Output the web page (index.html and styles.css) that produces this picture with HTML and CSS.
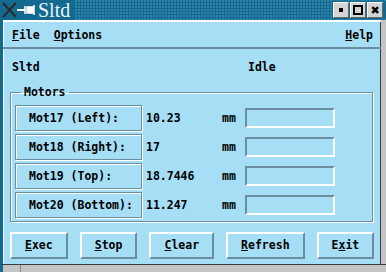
FILE: index.html
```html
<!DOCTYPE html>
<html>
<head>
<meta charset="utf-8">
<link rel="stylesheet" href="styles.css">
</head>
<body>
<div class="window">
  <div class="titlebar">
    <svg class="wm-icon" width="36" height="20" viewBox="0 0 36 20">
      <path d="M3 3 L16 17 M16 3 L3 17" stroke="#2a2a2a" stroke-width="2" fill="none"/>
      <path d="M17 10 H25" stroke="#ffffff" stroke-width="2"/>
      <path d="M25 6 V14 M27 7 H33 V13 H27 Z M34 5 V15" stroke="#ffffff" stroke-width="1.5" fill="#ffffff"/>
    </svg>
    <span class="title">Sltd</span>
    <span class="title-fill"></span>
    <div class="wm-buttons">
      <span class="wm-btn"><span class="dot"></span></span>
      <span class="wm-btn"><span class="sq"></span></span>
      <span class="wm-btn"><span class="x">✖</span></span>
    </div>
  </div>
  <div class="client">
    <div class="menubar">
      <span class="menu"><u>F</u>ile</span>
      <span class="menu"><u>O</u>ptions</span>
      <span class="menu-spacer"></span>
      <span class="menu"><u>H</u>elp</span>
    </div>
    <div class="status">
      <span class="status-name">Sltd</span>
      <span class="status-state">Idle</span>
    </div>
    <fieldset class="group">
      <legend class="group-label">Motors</legend>
      <div class="row">
        <div class="mot-label">Mot17 (Left):</div>
        <div class="mot-value">10.23</div>
        <div class="mot-unit">mm</div>
        <div class="mot-entry"></div>
      </div>
      <div class="row">
        <div class="mot-label">Mot18 (Right):</div>
        <div class="mot-value">17</div>
        <div class="mot-unit">mm</div>
        <div class="mot-entry"></div>
      </div>
      <div class="row">
        <div class="mot-label">Mot19 (Top):</div>
        <div class="mot-value">18.7446</div>
        <div class="mot-unit">mm</div>
        <div class="mot-entry"></div>
      </div>
      <div class="row">
        <div class="mot-label">Mot20 (Bottom):</div>
        <div class="mot-value">11.247</div>
        <div class="mot-unit">mm</div>
        <div class="mot-entry"></div>
      </div>
    </fieldset>
    <div class="buttons">
      <span class="btn"><u>E</u>xec</span>
      <span class="btn"><u>S</u>top</span>
      <span class="btn"><u>C</u>lear</span>
      <span class="btn"><u>R</u>efresh</span>
      <span class="btn">E<u>x</u>it</span>
    </div>
  </div>
  <div class="bottom-frame">
    <span class="corner"></span>
    <span class="edge"></span>
  </div>
</div>
</body>
</html>
```
FILE: styles.css
```css
html, body {
  margin: 0;
  padding: 0;
  width: 386px;
  height: 272px;
  overflow: hidden;
  background: #a6def6;
}
.window {
  width: 386px;
  height: 272px;
  display: flex;
  flex-direction: column;
  box-sizing: border-box;
  background: #a6def6;
}
.titlebar {
  height: 20px;
  display: flex;
  align-items: center;
  background-color: #146a8e;
  background-image: radial-gradient(circle at 1px 1px, #3d8fb5 0.6px, transparent 0.9px);
  background-size: 3px 3px;
  flex: none;
}
.wm-icon {
  flex: none;
  display: block;
  background: #146a8e;
}
.title {
  font-family: "Liberation Serif", "DejaVu Serif", serif;
  font-size: 20px;
  color: #e6f4fb;
  line-height: 18px;
  padding: 1px 4px 1px 2px;
  background: #146a8e;
}
.title-fill {
  flex: 1;
}
.wm-buttons {
  display: flex;
  gap: 1px;
  padding-right: 3px;
  height: 18px;
  align-items: center;
  background: #146a8e;
}
.wm-btn {
  width: 14px;
  height: 14px;
  background: #d4d4d4;
  border-top: 1px solid #ffffff;
  border-left: 1px solid #ffffff;
  border-right: 1px solid #666;
  border-bottom: 1px solid #666;
  display: flex;
  align-items: center;
  justify-content: center;
}
.dot {
  width: 4px;
  height: 4px;
  background: #000;
}
.sq {
  width: 6px;
  height: 6px;
  border: 2px solid #000;
}
.x {
  font-size: 11px;
  line-height: 11px;
  font-family: "DejaVu Sans", sans-serif;
  color: #000;
}
.client {
  flex: 1;
  display: flex;
  flex-direction: column;
  border-left: 3px solid #146a8e;
  border-right: 5px solid #c4c4c4;
  box-shadow: inset 1px 0 0 #ffffff, inset -1px 0 0 #3a3a3a;
  font-family: "DejaVu Sans Mono", "Liberation Mono", monospace;
  font-weight: bold;
  font-size: 11.5px;
  color: #000;
}
.menubar {
  height: 29px;
  box-sizing: border-box;
  display: flex;
  align-items: center;
  padding: 0 8px 0 9px;
  gap: 14px;
  border-top: 2px solid #ffffff;
  border-bottom: 2px solid #6a8da0;
  flex: none;
}
.menu-spacer {
  flex: 1;
}
.status {
  display: flex;
  padding: 11px 0 0 9px;
  height: 14px;
  line-height: 14px;
}
.status-name {
  width: 236px;
}
.group {
  margin: 12px 8px 0 7px;
  padding: 7px 0 3px 4px;
  border: 1px solid #6a8da0;
  box-shadow: inset 1px 1px 0 #ffffff, 1px 1px 0 #ffffff;
  display: flex;
  flex-direction: column;
  gap: 3px;
}
.group-label {
  padding: 0 3px;
  margin-left: 6px;
  line-height: 12px;
}
.row {
  display: flex;
  align-items: center;
  height: 26px;
}
.mot-label {
  width: 127px;
  height: 26px;
  box-sizing: border-box;
  border: 1px solid #6a8da0;
  box-shadow: inset 1px 1px 0 #ffffff, 1px 1px 0 #ffffff;
  padding-left: 13px;
  line-height: 24px;
  flex: none;
}
.mot-value {
  width: 76px;
  padding-left: 4px;
  flex: none;
}
.mot-unit {
  width: 23px;
  flex: none;
}
.mot-entry {
  width: 90px;
  height: 20px;
  box-sizing: border-box;
  border-top: 2px solid #6a8da0;
  border-left: 2px solid #6a8da0;
  border-bottom: 2px solid #ffffff;
  border-right: 2px solid #ffffff;
  flex: none;
}
.buttons {
  display: flex;
  gap: 12px;
  padding: 10px 0 0 7px;
}
.btn {
  height: 27px;
  box-sizing: border-box;
  padding: 0 13px;
  border-top: 2px solid #ffffff;
  border-left: 2px solid #ffffff;
  border-bottom: 2px solid #6a8da0;
  border-right: 2px solid #6a8da0;
  line-height: 23px;
  text-align: center;
}
.bottom-frame {
  height: 8px;
  flex: none;
  display: flex;
  background: #c4c4c4;
  border-top: 1px solid #3a3a3a;
  border-left: 3px solid #146a8e;
  box-sizing: border-box;
}
.corner {
  width: 17px;
  border-right: 1px solid #888;
}
.edge {
  flex: 1;
}
```
